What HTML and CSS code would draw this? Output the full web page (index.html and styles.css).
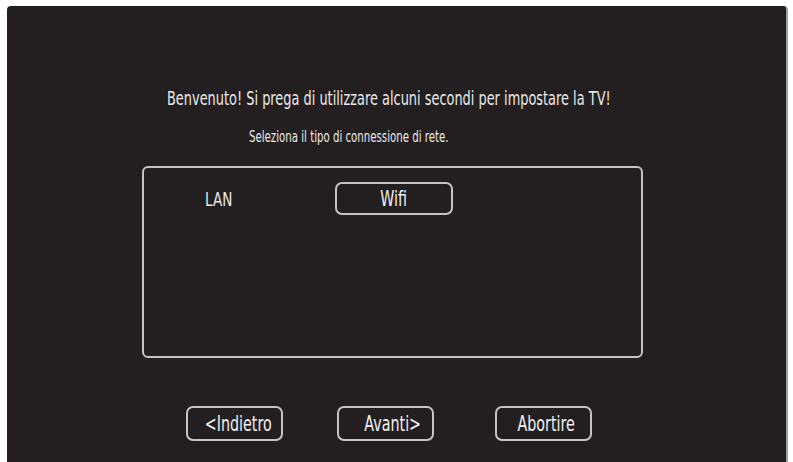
FILE: index.html
```html
<!DOCTYPE html>
<html lang="it">
<head>
<meta charset="utf-8">
<title>Impostazione TV</title>
<link rel="stylesheet" href="styles.css">
</head>
<body>
<div class="screen">
  <div class="title"><span class="cond">Benvenuto! Si prega di utilizzare alcuni secondi per impostare la TV!</span></div>
  <div class="subtitle"><span class="cond">Seleziona il tipo di connessione di rete.</span></div>
  <div class="panel">
    <div class="options">
      <span class="opt-label"><span class="cond">LAN</span></span>
      <span class="btn btn-wifi"><span class="cond mid">Wifi</span></span>
    </div>
  </div>
  <div class="nav">
    <span class="btn btn-nav btn-back"><span class="cond mid">&lt;Indietro</span></span>
    <span class="btn btn-nav btn-next"><span class="cond mid">Avanti&gt;</span></span>
    <span class="btn btn-nav btn-abort"><span class="cond mid">Abortire</span></span>
  </div>
</div>
</body>
</html>
```
FILE: styles.css
```css
html, body {
  margin: 0;
  padding: 0;
  background: #ffffff;
}
body {
  width: 793px;
  height: 462px;
  overflow: hidden;
  font-family: "DejaVu Sans", "Liberation Sans", sans-serif;
  color: #e9e9e9;
}
.cond {
  display: inline-block;
  white-space: nowrap;
  transform: scaleX(0.68);
  transform-origin: left center;
}
.cond.mid {
  transform-origin: center center;
}
.screen {
  margin: 6px 0 0 7px;
  width: 781px;
  height: 456px;
  background: #231f20;
  border-right: 2px solid #a0a0a0;
  border-radius: 4px 4px 0 0;
  box-sizing: border-box;
  padding-top: 80px;
  display: flex;
  flex-direction: column;
}
.title {
  padding-left: 160px;
  font-size: 19px;
  line-height: 24px;
  white-space: nowrap;
}
.subtitle {
  padding-left: 242px;
  margin-top: 18px;
  font-size: 15px;
  line-height: 18px;
  white-space: nowrap;
}
.panel {
  margin: 20px 0 0 135px;
  width: 501px;
  height: 192px;
  border: 2px solid #c4c4c4;
  border-radius: 6px;
  box-sizing: border-box;
}
.options {
  display: flex;
  align-items: center;
  margin-top: 14px;
  padding-left: 61px;
}
.opt-label {
  font-size: 20px;
  width: 130px;
}
.btn {
  display: flex;
  align-items: center;
  justify-content: center;
  border: 2px solid #c4c4c4;
  border-radius: 7px;
  box-sizing: border-box;
  font-size: 20px;
  color: #f0f0f0;
}
.btn-wifi {
  width: 118px;
  height: 33px;
  font-size: 21px;
}
.nav {
  display: flex;
  margin: 48px 0 0 179px;
}
.btn-nav {
  width: 97px;
  height: 35px;
  font-size: 21px;
}
.btn-back {
  padding-left: 8px;
}
.btn-next {
  margin-left: 54px;
  padding-left: 15px;
}
.btn-abort {
  margin-left: 61px;
  padding-left: 6px;
}
```
